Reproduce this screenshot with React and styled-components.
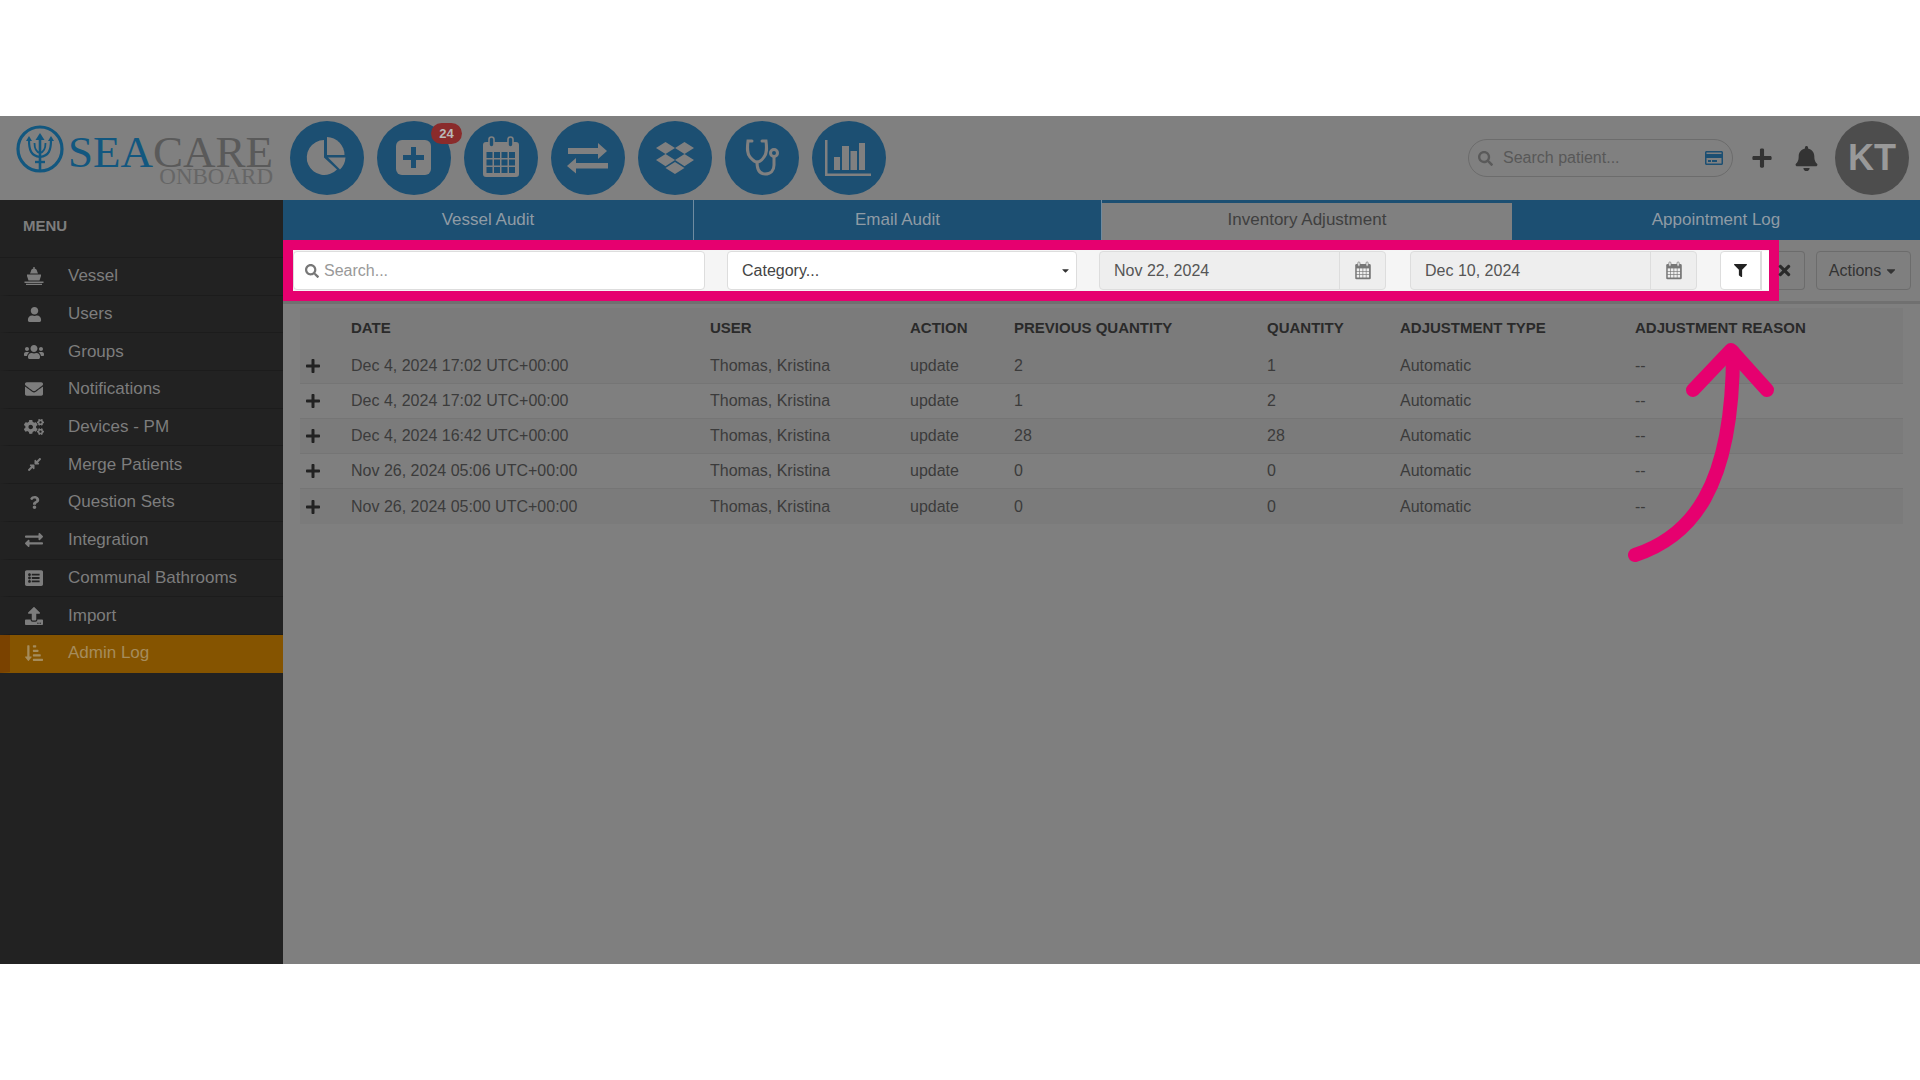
import React from "react";
import styled, { createGlobalStyle } from "styled-components";
import {
  FaBell,
  FaCaretDown,
  FaCogs,
  FaCompressAlt,
  FaDropbox,
  FaEnvelope,
  FaExchangeAlt,
  FaFilter,
  FaListAlt,
  FaPlus,
  FaQuestion,
  FaRegCreditCard,
  FaSearch,
  FaSortAmountDownAlt,
  FaTimes,
  FaUpload,
  FaUser,
  FaUsers,
} from "react-icons/fa";

const GlobalStyle = createGlobalStyle`
  html, body {
    margin: 0;
    padding: 0;
    background: #fff;
    font-family: "Liberation Sans", Arial, sans-serif;
  }
  * { box-sizing: border-box; }
`;

const ShipIcon = () => (
  <svg width="20" height="18" viewBox="0 0 20 18" fill="currentColor">
    <path d="M7 4c0-1.500 1.300-2.500 3-2.500s3 1 3 2.500l1 2.500H6z" />
    <path d="M9.300 0h1.400v2H9.300z" />
    <path d="M3 7.500h14V9l-1.500 4.500h-11L3 9z" />
    <path d="M.500 14.500h19V16h-19zM2 16.800h16V18H2z" />
  </svg>
);

const menuItems = [
  { label: "Vessel", icon: <ShipIcon /> },
  { label: "Users", icon: <FaUser size={15} /> },
  { label: "Groups", icon: <FaUsers size={20} /> },
  { label: "Notifications", icon: <FaEnvelope size={18} /> },
  { label: "Devices - PM", icon: <FaCogs size={20} /> },
  { label: "Merge Patients", icon: <FaCompressAlt size={15} /> },
  { label: "Question Sets", icon: <FaQuestion size={13} /> },
  { label: "Integration", icon: <FaExchangeAlt size={18} /> },
  { label: "Communal Bathrooms", icon: <FaListAlt size={18} /> },
  { label: "Import", icon: <FaUpload size={18} /> },
  { label: "Admin Log", icon: <FaSortAmountDownAlt size={18} />, active: true },
];

const rows = [
  ["Dec 4, 2024 17:02 UTC+00:00", "2", "1"],
  ["Dec 4, 2024 17:02 UTC+00:00", "1", "2"],
  ["Dec 4, 2024 16:42 UTC+00:00", "28", "28"],
  ["Nov 26, 2024 05:06 UTC+00:00", "0", "0"],
  ["Nov 26, 2024 05:00 UTC+00:00", "0", "0"],
];

const tabs = ["Vessel Audit", "Email Audit", "Inventory Adjustment", "Appointment Log"];

const Trident = () => (
  <svg width="48" height="48" viewBox="0 0 48 48" fill="none" stroke="#12577f">
    <circle cx="24" cy="24" r="22" strokeWidth="3.200" />
    <path d="M24 12v35" strokeWidth="2.600" />
    <path d="M24 8l-4.500 7h9z" fill="#12577f" stroke="none" />
    <path d="M13 15c0 10 2 16 11 17 9-1 11-7 11-17" strokeWidth="2.200" />
    <path d="M18.500 18c0 6 1.500 9 5.500 10 4-1 5.500-4 5.500-10" strokeWidth="1.800" />
    <path d="M13 11l-3 5h6zM35 11l-3 5h6z" fill="#12577f" stroke="none" />
    <path d="M19 37h10" strokeWidth="2.400" />
  </svg>
);

const PieIcon = () => (
  <svg width="74" height="74" viewBox="0 0 74 74" fill="#808080">
    <path d="M34 19v17.500L47 48.500A17.500 17.500 0 1 1 34 19z" />
    <path d="M37 16a18 18 0 0 1 17.500 18H37z" />
    <path d="M38 36.500h17.500a18 18 0 0 1-5.500 12z" />
  </svg>
);

const PlusBoxIcon = () => (
  <svg width="74" height="74" viewBox="0 0 74 74">
    <rect x="19" y="19" width="35" height="35" rx="6" fill="#808080" />
    <path d="M36.500 26v21M26 36.500h21" stroke="#1c4f72" strokeWidth="5" />
  </svg>
);

const CalendarGrid = ({ size = 74, color = "#808080", back = "#1c4f72" }) => (
  <svg width={size} height={size} viewBox="0 0 74 74">
    <rect x="19" y="21" width="36" height="35" rx="3" fill={color} />
    <rect x="25" y="16" width="5" height="10" rx="2.500" fill={back} stroke={color} strokeWidth="1.600" />
    <rect x="44" y="16" width="5" height="10" rx="2.500" fill={back} stroke={color} strokeWidth="1.600" />
    {[0, 1, 2].map((r) =>
      [0, 1, 2, 3].map((c) => (
        <rect key={`${r}-${c}`} x={22.500 + c * 7.500} y={31 + r * 7.500} width="6" height="6" fill={back} />
      ))
    )}
  </svg>
);

const ArrowsIcon = () => (
  <svg width="74" height="74" viewBox="0 0 74 74" fill="#808080">
    <path d="M17 27h30v-5l9 8-9 8v-5H17zM57 42H25v-5l-9 8 9 7.500v-5h32z" />
  </svg>
);

const StethoscopeIcon = () => (
  <svg width="74" height="74" viewBox="0 0 74 74" fill="none" stroke="#808080" strokeWidth="3" strokeLinecap="round">
    <path d="M27 20h-4c-1 8-1 12 2 16 2.500 3 5 5 7 5s5-2 7-5c3-4 3-8 2-16h-4" />
    <path d="M32 41c0 7 2 12 8 12 6 0 9-4 9-9v-8" />
    <circle cx="49" cy="32" r="3.500" />
  </svg>
);

const BarsIcon = () => (
  <svg width="74" height="74" viewBox="0 0 74 74" fill="#808080">
    <path d="M13 19h2.500v33.500H59V55H13z" />
    <rect x="22" y="36" width="6" height="13" />
    <rect x="30" y="25" width="7" height="24" />
    <rect x="38.500" y="30" width="6.500" height="19" />
    <rect x="47" y="22" width="6" height="27" />
  </svg>
);

const App = () => {
  return (
    <Page>
      <GlobalStyle />
      <Frame>
        <Header>
          <Logo>
            <Trident />
            <LogoText>
              <LogoName>
                <LogoSea>SEA</LogoSea>CARE
              </LogoName>
              <LogoSub>ONBOARD</LogoSub>
            </LogoText>
          </Logo>
          <CircleNav>
            <CircleButton><PieIcon /></CircleButton>
            <CircleButton>
              <PlusBoxIcon />
              <Badge>24</Badge>
            </CircleButton>
            <CircleButton><CalendarGrid /></CircleButton>
            <CircleButton><ArrowsIcon /></CircleButton>
            <CircleButton><FaDropbox size={38} color="#808080" /></CircleButton>
            <CircleButton><StethoscopeIcon /></CircleButton>
            <CircleButton><BarsIcon /></CircleButton>
          </CircleNav>
          <HeaderRight>
            <PatientSearch>
              <FaSearch size={15} color="#5a5a5a" />
              <PatientPlaceholder>Search patient...</PatientPlaceholder>
              <FaRegCreditCard size={18} color="#1c4f72" />
            </PatientSearch>
            <HeaderAction><FaPlus size={22} /></HeaderAction>
            <HeaderAction><FaBell size={25} /></HeaderAction>
            <Avatar>KT</Avatar>
          </HeaderRight>
        </Header>
        <Body>
          <Sidebar>
            <MenuTitle>MENU</MenuTitle>
            {menuItems.map((item) => (
              <MenuItem key={item.label} $active={item.active}>
                <MenuIcon>{item.icon}</MenuIcon>
                {item.label}
              </MenuItem>
            ))}
          </Sidebar>
          <Main>
            <Tabs>
              {tabs.map((tab, i) => (
                <Tab key={tab} $active={i === 2}>
                  <TabLabel $active={i === 2}>{tab}</TabLabel>
                </Tab>
              ))}
            </Tabs>
            <Toolbar>
              <Highlight>
                <SearchField>
                  <FaSearch size={14} color="#777" />
                  Search...
                </SearchField>
                <CategoryField>
                  Category...
                  <FaCaretDown size={11} color="#333" />
                </CategoryField>
                <DateField>
                  <DateValue>Nov 22, 2024</DateValue>
                  <DateAddon><CalendarGrid size={32} color="#777" back="#eee" /></DateAddon>
                </DateField>
                <DateField>
                  <DateValue>Dec 10, 2024</DateValue>
                  <DateAddon><CalendarGrid size={32} color="#777" back="#eee" /></DateAddon>
                </DateField>
                <FilterButton><FaFilter size={13} /></FilterButton>
                <ClearStub />
              </Highlight>
              <ClearButton><ClearIcon size={17} /></ClearButton>
              <ActionsButton>
                Actions <FaCaretDown size={14} />
              </ActionsButton>
            </Toolbar>
            <Table>
              <HeadRow>
                <span />
                <span>Date</span>
                <span>User</span>
                <span>Action</span>
                <span>Previous Quantity</span>
                <span>Quantity</span>
                <span>Adjustment Type</span>
                <span>Adjustment Reason</span>
              </HeadRow>
              {rows.map((row, i) => (
                <Row key={i} $odd={i % 2 === 0}>
                  <ExpandCell><FaPlus size={16} /></ExpandCell>
                  <span>{row[0]}</span>
                  <span>Thomas, Kristina</span>
                  <span>update</span>
                  <span>{row[1]}</span>
                  <span>{row[2]}</span>
                  <span>Automatic</span>
                  <span>--</span>
                </Row>
              ))}
            </Table>
          </Main>
        </Body>
      </Frame>
      <CalloutArrow width="1920" height="1080" viewBox="0 0 1920 1080" fill="none" stroke="#e6006f" strokeWidth="14" strokeLinecap="round" strokeLinejoin="round">
        <path d="M1635 555C1690 537 1733 490 1733 352" />
        <path d="M1693 390L1731 350 1767 390" />
      </CalloutArrow>
    </Page>
  );
};

export default App;

const Page = styled.div`
  position: relative;
  width: 1920px;
  height: 1080px;
  padding: 116px 0;
  overflow: hidden;
  background: #fff;
`;

const Frame = styled.div`
  display: flex;
  flex-direction: column;
  height: 848px;
  background: #808080;
`;

const Header = styled.header`
  display: flex;
  align-items: center;
  height: 84px;
  flex: none;
`;

const Logo = styled.div`
  display: flex;
  align-items: flex-start;
  width: 290px;
  height: 66px;
  padding-left: 16px;
  flex: none;
`;

const LogoText = styled.div`
  display: flex;
  flex-direction: column;
  align-items: flex-end;
  margin-left: 4px;
  margin-top: 9px;
  font-family: "Liberation Serif", "Times New Roman", serif;
  color: #5a5a5a;
`;

const LogoName = styled.div`
  font-size: 45px;
  line-height: 36px;
`;

const LogoSea = styled.span`
  color: #12577f;
`;

const LogoSub = styled.div`
  font-size: 23px;
  line-height: 14px;
  color: #666;
`;

const CircleNav = styled.nav`
  display: flex;
  gap: 13px;
`;

const CircleButton = styled.div`
  position: relative;
  display: flex;
  align-items: center;
  justify-content: center;
  width: 74px;
  height: 74px;
  border-radius: 50%;
  background: #1c4f72;
`;

const Badge = styled.span`
  position: absolute;
  top: 2px;
  right: -11px;
  width: 31px;
  height: 21px;
  border-radius: 11px;
  background: #8a2b2b;
  color: #b9b9b9;
  font-size: 13px;
  font-weight: 700;
  line-height: 21px;
  text-align: center;
`;

const HeaderRight = styled.div`
  display: flex;
  align-items: center;
  margin-left: auto;
  padding-right: 11px;
`;

const PatientSearch = styled.div`
  display: flex;
  align-items: center;
  width: 265px;
  height: 38px;
  margin-right: 7px;
  padding: 0 9px 0 9px;
  border: 1px solid #6c6c6c;
  border-radius: 19px;
`;

const PatientPlaceholder = styled.span`
  flex: 1;
  margin-left: 10px;
  color: #585858;
  font-size: 16px;
`;

const HeaderAction = styled.div`
  display: flex;
  align-items: center;
  justify-content: center;
  width: 44px;
  color: #333;
`;

const Avatar = styled.div`
  display: flex;
  align-items: center;
  justify-content: center;
  width: 74px;
  height: 74px;
  margin-left: 7px;
  border-radius: 50%;
  background: #4d4d4d;
  color: #999;
  font-size: 36px;
  font-weight: 700;
`;

const Body = styled.div`
  display: flex;
  flex: 1;
  min-height: 0;
`;

const Sidebar = styled.aside`
  width: 283px;
  flex: none;
  background: #222;
`;

const MenuTitle = styled.div`
  height: 58px;
  padding: 17px 0 0 23px;
  border-bottom: 1px solid #1c1c1c;
  color: #7d7d7d;
  font-size: 15px;
  font-weight: 700;
`;

const MenuItem = styled.div`
  display: flex;
  align-items: center;
  height: 37.7px;
  border-bottom: 1px solid ${({ $active }) => ($active ? "#855400" : "#1c1c1c")};
  border-left: 10px solid ${({ $active }) => ($active ? "#7a4200" : "transparent")};
  background: ${({ $active }) => ($active ? "#855400" : "transparent")};
  color: ${({ $active }) => ($active ? "#a58c5c" : "#7d7d7d")};
  font-size: 17px;
`;

const MenuIcon = styled.span`
  display: flex;
  justify-content: center;
  width: 48px;
  margin-right: 10px;
`;

const Main = styled.main`
  display: flex;
  flex-direction: column;
  flex: 1;
  min-width: 0;
  background: #7f7f7f;
`;

const Tabs = styled.div`
  display: grid;
  grid-template-columns: 411px 408px 410px 408px;
  height: 40px;
  flex: none;
  background: #1c4f72;
`;

const Tab = styled.div`
  display: flex;
  align-items: center;
  justify-content: center;
  margin-top: ${({ $active }) => ($active ? "3px" : "0")};
  border-right: 1px solid ${({ $active }) => ($active ? "#808080" : "#6f8ba0")};
  background: ${({ $active }) => ($active ? "#808080" : "transparent")};
  color: ${({ $active }) => ($active ? "#3f3f3f" : "#8f9ba5")};
  font-size: 17px;
  &:nth-child(n + 3) {
    border-right: none;
  }
`;

const TabLabel = styled.span`
  margin-top: ${({ $active }) => ($active ? "-3px" : "0")};
`;

const Toolbar = styled.div`
  display: flex;
  align-items: flex-start;
  height: 64px;
  flex: none;
  border-bottom: 3px solid #707070;
`;

const Highlight = styled.div`
  display: flex;
  width: 1496px;
  height: 61px;
  padding: 1px 0 0;
  border: 10px solid #e6006f;
  background: #f5f5f5;
`;

const inputBase = `
  display: flex;
  align-items: center;
  height: 39px;
  border: 1px solid #ddd;
  border-radius: 4px;
  color: #555;
  font-size: 16px;
`;

const SearchField = styled.div`
  ${inputBase}
  gap: 5px;
  width: 412px;
  margin-right: 22px;
  padding-left: 11px;
  background: #fff;
  color: #999;
`;

const CategoryField = styled.div`
  ${inputBase}
  justify-content: space-between;
  width: 350px;
  margin-right: 22px;
  padding: 0 5px 0 14px;
  background: #fff;
  color: #444;
`;

const DateField = styled.div`
  ${inputBase}
  width: 287px;
  margin-right: 24px;
  background: #eee;
`;

const DateValue = styled.span`
  flex: 1;
  padding-left: 14px;
`;

const DateAddon = styled.span`
  display: flex;
  align-items: center;
  justify-content: center;
  width: 46px;
  height: 100%;
  border-left: 1px solid #ddd;
`;

const FilterButton = styled.div`
  ${inputBase}
  justify-content: center;
  width: 41px;
  margin-left: -1px;
  border-radius: 4px 0 0 4px;
  background: #fff;
  color: #222;
`;

const ClearStub = styled.div`
  width: 8px;
  height: 39px;
  border-left: 1px solid #ddd;
  background: #fff;
`;

const ClearButton = styled.div`
  display: flex;
  align-items: center;
  width: 26px;
  height: 39px;
  margin-top: 11px;
  border: 1px solid #6c6c6c;
  border-left: none;
  border-radius: 0 4px 4px 0;
  color: #2a2a2a;
`;

const ClearIcon = styled(FaTimes)`
  flex: none;
  margin-left: -3px;
`;

const ActionsButton = styled.div`
  display: flex;
  align-items: center;
  justify-content: center;
  gap: 3px;
  width: 95px;
  height: 39px;
  margin: 11px 0 0 11px;
  border: 1px solid #6c6c6c;
  border-radius: 4px;
  color: #333;
  font-size: 16px;
`;

const Table = styled.div`
  width: 1603px;
  margin: 4px 0 0 17px;
  color: #3b3b3b;
  font-size: 16px;
`;

const columns = "51px 359px 200px 104px 253px 133px 235px 1fr";

const HeadRow = styled.div`
  display: grid;
  grid-template-columns: ${columns};
  align-items: center;
  height: 41px;
  padding-bottom: 3px;
  background: #7b7b7b;
  color: #2a2a2a;
  font-size: 15px;
  font-weight: 700;
  text-transform: uppercase;
`;

const Row = styled.div`
  display: grid;
  grid-template-columns: ${columns};
  align-items: center;
  height: 35px;
  border-bottom: 1px solid #757575;
  background: ${({ $odd }) => ($odd ? "#7b7b7b" : "#7f7f7f")};
  &:last-child {
    border-bottom: none;
  }
`;

const ExpandCell = styled.span`
  display: flex;
  padding-left: 5px;
  color: #222;
`;

const CalloutArrow = styled.svg`
  position: absolute;
  top: 0;
  left: 0;
  pointer-events: none;
`;
